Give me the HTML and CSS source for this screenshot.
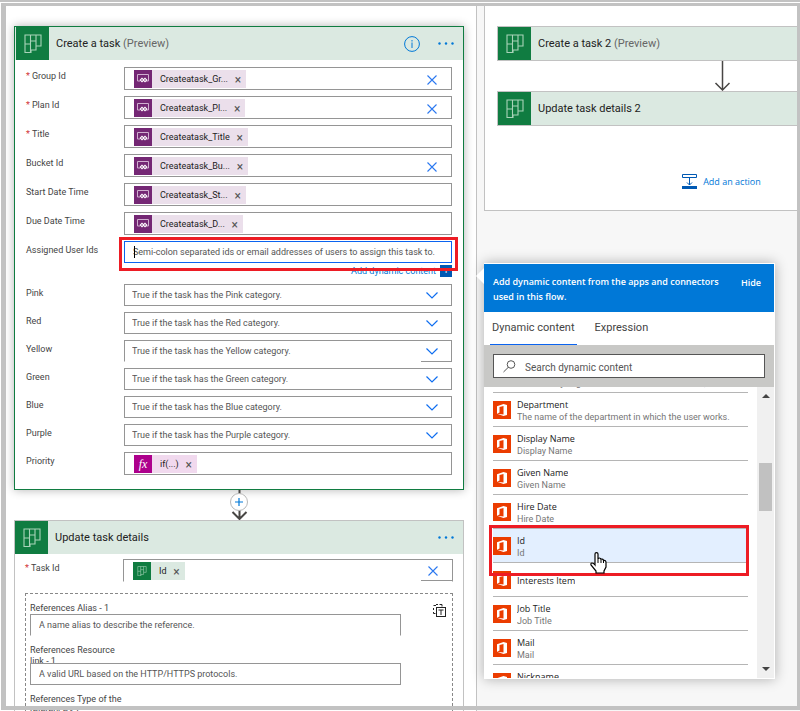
FILE: index.html
```html
<!DOCTYPE html>
<html lang="en">
<head>
<meta charset="utf-8">
<title>Flow designer</title>
<link rel="stylesheet" href="styles.css">
</head>
<body>
<svg class="defs" aria-hidden="true">
  <symbol id="planner" viewBox="0 0 18 19"><path d="M1 1H17V12H12V16H7V18.500H1ZM6.500 1V18M12 1V12M1 10H6.500M6.500 7H12" fill="none" stroke="currentColor" stroke-width="1.100"/></symbol>
  <symbol id="variable" viewBox="0 0 12 10"><path d="M3 7H.5V.5H11.500V7H9" fill="none" stroke="#cfaecf"/><path d="M2.500 6L5 3.500 6.500 5 8 3.500 10.500 6 8 8.500 6.500 7 5 8.500Z" fill="#fff"/><circle cx="5" cy="6" r=".8" fill="#742774"/><circle cx="8" cy="6" r=".8" fill="#742774"/></symbol>
  <symbol id="cross" viewBox="0 0 10 10"><path d="M.5.5L9.500 9.500M9.500.5L.5 9.500" fill="none" stroke="#2b78f0" stroke-width="1.100"/></symbol>
  <symbol id="chevron" viewBox="0 0 12 7"><path d="M.5.5L6 6 11.500.5" fill="none" stroke="currentColor" stroke-width="1.200"/></symbol>
  <symbol id="dots" viewBox="0 0 16 3"><circle cx="1.500" cy="1.500" r="1.200"/><circle cx="8" cy="1.500" r="1.200"/><circle cx="14.500" cy="1.500" r="1.200"/></symbol>
  <symbol id="office" viewBox="0 0 18 18"><path d="M4 5.200L10.500 3 14 4V14L10.500 15 4 12.800 10.500 13.500V5L6.500 6V11.500L4 12.800Z" fill="#fff"/></symbol>
</svg>
<main class="canvas">
  <section class="branch-left">
    <article class="card card-active">
      <header class="card-head">
        <span class="tile"><svg><use href="#planner"/></svg></span>
        <h2>Create a task <small>(Preview)</small></h2>
        <button class="icon-btn" aria-label="Information"><svg width="16" height="16" viewBox="0 0 16 16"><circle cx="8" cy="8" r="7.400" fill="none" stroke="currentColor"/><path d="M8 4V5.500M8 6.500V12" stroke="currentColor"/></svg></button>
        <button class="icon-btn more" aria-label="More"><svg width="16" height="3"><use href="#dots"/></svg></button>
      </header>
      <form class="form">
        <div class="row"><label for="group" class="required">Group Id</label><div class="field"><span class="token"><i><svg><use href="#variable"/></svg></i><span class="token-name">Createatask_Gr...</span><button type="button" aria-label="Remove">×</button></span><input id="group"><button type="button" class="clear" aria-label="Clear"><svg><use href="#cross"/></svg></button></div></div>
        <div class="row"><label for="plan" class="required">Plan Id</label><div class="field"><span class="token"><i><svg><use href="#variable"/></svg></i><span class="token-name">Createatask_Pl...</span><button type="button" aria-label="Remove">×</button></span><input id="plan"><button type="button" class="clear" aria-label="Clear"><svg><use href="#cross"/></svg></button></div></div>
        <div class="row"><label for="title" class="required">Title</label><div class="field"><span class="token"><i><svg><use href="#variable"/></svg></i><span class="token-name">Createatask_Title</span><button type="button" aria-label="Remove">×</button></span><input id="title"></div></div>
        <div class="row"><label for="bucket">Bucket Id</label><div class="field"><span class="token"><i><svg><use href="#variable"/></svg></i><span class="token-name">Createatask_Bu...</span><button type="button" aria-label="Remove">×</button></span><input id="bucket"><button type="button" class="clear" aria-label="Clear"><svg><use href="#cross"/></svg></button></div></div>
        <div class="row"><label for="start">Start Date Time</label><div class="field"><span class="token"><i><svg><use href="#variable"/></svg></i><span class="token-name">Createatask_St...</span><button type="button" aria-label="Remove">×</button></span><input id="start"></div></div>
        <div class="row"><label for="due">Due Date Time</label><div class="field"><span class="token"><i><svg><use href="#variable"/></svg></i><span class="token-name">Createatask_D...</span><button type="button" aria-label="Remove">×</button></span><input id="due"></div></div>
        <div class="row"><label for="assigned">Assigned User Ids</label>
          <div class="assigned">
            <input id="assigned" class="text focused" placeholder="Semi-colon separated ids or email addresses of users to assign this task to.">
            <span class="caret"></span>
            <a href="#dynamic" class="add-dynamic">Add dynamic content <span class="plus">+</span></a>
            <span class="highlight highlight-field"></span>
          </div>
        </div>
        <div class="row"><label for="pink">Pink</label><div class="select"><select id="pink"><option>True if the task has the Pink category.</option></select><svg><use href="#chevron"/></svg></div></div>
        <div class="row"><label for="red">Red</label><div class="select"><select id="red"><option>True if the task has the Red category.</option></select><svg><use href="#chevron"/></svg></div></div>
        <div class="row"><label for="yellow">Yellow</label><div class="select open"><select id="yellow"><option>True if the task has the Yellow category.</option></select><svg><use href="#chevron"/></svg></div></div>
        <div class="row"><label for="green">Green</label><div class="select"><select id="green"><option>True if the task has the Green category.</option></select><svg><use href="#chevron"/></svg></div></div>
        <div class="row"><label for="blue">Blue</label><div class="select"><select id="blue"><option>True if the task has the Blue category.</option></select><svg><use href="#chevron"/></svg></div></div>
        <div class="row"><label for="purple">Purple</label><div class="select"><select id="purple"><option>True if the task has the Purple category.</option></select><svg><use href="#chevron"/></svg></div></div>
        <div class="row"><label for="priority">Priority</label><div class="field"><span class="token token-fx"><i>fx</i><span class="token-name">if(...)</span><button type="button" aria-label="Remove">×</button></span><input id="priority"></div></div>
      </form>
    </article>
    <button class="connector" aria-label="Insert step"><svg width="20" height="30" viewBox="0 0 20 30"><path d="M10.500 0V28M3.500 22L10.500 29 17.500 22" fill="none" stroke="#484644" stroke-width="2"/><circle cx="10" cy="12" r="8.500" fill="#fff" stroke="#b8b8b8"/><path d="M6 12H14M10 8V16" stroke="#0078d7" stroke-width="1.200"/></svg></button>
    <article class="card">
      <header class="card-head">
        <span class="tile"><svg><use href="#planner"/></svg></span>
        <h2>Update task details</h2>
        <button class="icon-btn more" aria-label="More"><svg width="16" height="3"><use href="#dots"/></svg></button>
      </header>
      <form class="form form-details">
        <div class="row"><label for="taskid" class="required">Task Id</label><div class="field open"><span class="token token-planner"><i><svg><use href="#planner"/></svg></i><span class="token-name">Id</span><button type="button" aria-label="Remove">×</button></span><input id="taskid"><button type="button" class="clear" aria-label="Clear"><svg><use href="#cross"/></svg></button></div></div>
        <fieldset>
          <div class="stack">
            <label for="alias">References Alias - 1</label>
            <input id="alias" class="text open" placeholder="A name alias to describe the reference.">
            <label for="link">References Resource link - 1</label>
            <input id="link" class="text overlap" placeholder="A valid URL based on the HTTP/HTTPS protocols.">
            <label for="type">References Type of the reference - 1</label>
            <input id="type" class="text overlap">
          </div>
          <button type="button" class="switch" aria-label="Switch to input entire array"><svg width="13" height="13" viewBox="0 0 13 13"><path d="M3 1.500H.5M.5 4V6M.5 8V9.500H2.500M3 .5H5M6.500 .5H9V2.500" fill="none" stroke="#222"/><rect x="3.500" y="3.500" width="9" height="9" fill="#fff" stroke="#222"/><path d="M5.500 6H10.500M8 6V11" stroke="#222"/></svg></button>
        </fieldset>
      </form>
    </article>
  </section>
  <section class="branch-right">
    <div class="branch-box">
      <article class="card"><header class="card-head"><span class="tile"><svg><use href="#planner"/></svg></span><h2>Create a task 2 <small>(Preview)</small></h2></header></article>
      <svg class="arrow" viewBox="0 0 16 30"><path d="M8.500 0V28M1.500 22L8.500 29 15.500 22" fill="none" stroke="#484644" stroke-width="1.500"/></svg>
      <article class="card"><header class="card-head"><span class="tile"><svg><use href="#planner"/></svg></span><h2>Update task details 2</h2></header></article>
      <button class="add-action"><svg width="15" height="15" viewBox="0 0 15 15"><path d="M.5.5H14.500V3.500H.5ZM7.500 3.500V11M5 8.500L7.500 11 10 8.500" fill="none" stroke="#0059b3"/><path d="M0 12H15V15H0Z" fill="#0059b3"/></svg>Add an action</button>
    </div>
  </section>
  <aside class="popup" id="dynamic">
    <header class="popup-head"><p>Add dynamic content from the apps and connectors used in this flow.</p><button>Hide</button></header>
    <nav class="tabs"><button class="current">Dynamic content</button><button>Expression</button></nav>
    <div class="search"><div class="search-box"><svg width="13" height="13" viewBox="0 0 13 13"><circle cx="8" cy="4.500" r="3.800" fill="none" stroke="#555"/><path d="M5.300 7.300L.5 12" stroke="#555"/></svg><input aria-label="Search dynamic content" placeholder="Search dynamic content"></div></div>
    <div class="results">
      <ul>
        <li><svg><use href="#office"/></svg><div><b>Country</b><span>The country/region in which the user is located; for example, US or UK.</span></div></li>
        <li><svg><use href="#office"/></svg><div><b>Department</b><span>The name of the department in which the user works.</span></div></li>
        <li><svg><use href="#office"/></svg><div><b>Display Name</b><span>Display Name</span></div></li>
        <li><svg><use href="#office"/></svg><div><b>Given Name</b><span>Given Name</span></div></li>
        <li><svg><use href="#office"/></svg><div><b>Hire Date</b><span>Hire Date</span></div></li>
        <li class="selected"><svg><use href="#office"/></svg><div><b>Id</b><span>Id</span></div><span class="highlight highlight-item"></span>
          <svg class="cursor" viewBox="0 0 17 22"><path d="M5 12V2Q5 .7 6.500.7T8 2V7Q8 6 9.300 6T11 7.500Q11 7 12.200 7.200T13.500 8.500Q16 8 16 10.500V15L14 19V21H6V19L1 13Q.5 11 2 11 3.500 11 5 13Z" fill="#fff" stroke="#000" stroke-width="1.200"/><path d="M8 7V11M11 7.500V11M13.500 8.500V11" stroke="#000"/></svg></li>
        <li><svg><use href="#office"/></svg><div><b>Interests Item</b></div></li>
        <li><svg><use href="#office"/></svg><div><b>Job Title</b><span>Job Title</span></div></li>
        <li><svg><use href="#office"/></svg><div><b>Mail</b><span>Mail</span></div></li>
        <li><svg><use href="#office"/></svg><div><b>Nickname</b><span>Nickname</span></div></li>
      </ul>
      <div class="scrollbar"><span class="up"></span><span class="thumb"></span><span class="down"></span></div>
    </div>
  </aside>
</main>
<div class="frame-top"></div>
<div class="frame"></div>
</body>
</html>
```

FILE: styles.css
```css
* { box-sizing: border-box; }
body { margin: 0; background: #fff; color: #444; font: 9px/12px Roboto, "Open Sans", sans-serif; }
button, input, select { font: inherit; color: inherit; border: 0; padding: 0; margin: 0; background: none; border-radius: 0; outline: 0; min-width: 0; }
button { cursor: pointer; }
input::placeholder { color: #555; opacity: 1; }
svg { display: block; flex: none; }
.defs { position: absolute; width: 0; height: 0; }

.canvas { position: relative; display: grid; grid-template-columns: minmax(0, 477fr) minmax(0, 323fr); height: 100vh; overflow: hidden; }
.branch-left { padding: 26px 12px 0 14px; border-right: 1px solid #c2c2c2; }
.branch-right { background: #f7f7f7; padding-left: 7px; overflow: hidden; }
.branch-box { display: flex; flex-direction: column; align-items: center; width: 476px; padding: 26px 13px 21px 12px; background: #fff; border: 1px solid #c2c2c2; border-top: 0; }
.branch-box .card { width: 100%; }

.card { border: 1px solid #c2c2c2; background: #fff; }
.card-active { border-color: #107c41; box-shadow: 0 0 9px rgba(0, 0, 0, .3); }
.card-head { display: flex; align-items: center; background: #dbe9e1; padding-right: 9px; }
.card-active .card-head { padding-left: 1px; }
.tile { display: grid; place-items: center; width: 33px; height: 33px; background: #107c41; color: #a9d3b9; }
.tile svg { width: 18px; height: 19px; }
.card-head h2 { flex: 1; margin: 0 0 0 7px; font-size: 11px; line-height: 16px; font-weight: 400; color: #222; }
.card-head small { font-size: 11px; color: #666; }
.icon-btn { color: #0078d7; fill: #0078d7; }
.more { margin-left: 18px; }

.form { display: grid; gap: 6px; padding: 7px 11px 14px 11px; }
.row { display: grid; grid-template-columns: 98px minmax(0, 1fr); align-items: start; }
.row > label { line-height: 19px; }
.required::before { content: "*"; color: #d13438; margin-right: 2px; }
.field { display: flex; align-items: center; height: 23px; padding-left: 9px; border: 1px solid #959595; }
.field input { flex: 1; height: 19px; }
.token { display: flex; align-items: center; height: 18px; background: #ebdfeb; color: #222; }
.token i { display: grid; place-items: center; width: 18px; height: 18px; margin-right: 8px; background: #742774; color: #fff; font: italic 12px/16px "Liberation Serif", serif; }
.token i svg { width: 12px; height: 10px; }
.token button { width: 16px; height: 18px; margin-left: 2px; font-size: 12px; line-height: 20px; color: #555; }
.token-fx { background: #f1d9ee; }
.token-fx i { background: #ad008c; }
.token-planner { background: #dbe9e1; }
.token-planner i { background: #107c41; color: #a9d3b9; }
.clear { display: grid; place-items: center; align-self: stretch; width: 31px; padding: 2px 8px 0 0; }
.clear svg { width: 10px; height: 10px; }
.text { display: block; width: 100%; height: 22px; padding-left: 8px; border: 1px solid #959595; }
.focused { border-color: #0b64f0; }
.select { display: flex; align-items: center; height: 22px; border: 1px solid #959595; }
.select select { appearance: none; flex: 1; height: 20px; padding-left: 7px; color: #555; }
.select svg { width: 12px; height: 7px; margin: 0 13px 0 6px; color: #0f6ef0; }
.open { border-bottom-color: transparent; }
.field.open .clear { border-bottom: 1px solid #959595; }
.select.open { background: linear-gradient(#959595, #959595) right bottom / 31px 1px no-repeat border-box; }

.assigned { position: relative; }
.caret { position: absolute; left: 10px; top: 5px; width: 1px; height: 12px; background: #000; }
.add-dynamic { display: flex; justify-content: flex-end; align-items: center; height: 15px; color: #0078d7; text-decoration: none; }
.plus { width: 12px; margin-left: 4px; background: #0059b3; color: #fff; line-height: 12px; text-align: center; }
.highlight { position: absolute; border: 3px solid #ed1c24; pointer-events: none; }
.highlight-field { inset: -4px -6px 7px -5px; }

.connector { display: block; margin: 0 auto; }
.form-details { padding: 5px 10px 0 10px; gap: 11px; }
fieldset { display: flex; justify-content: space-between; align-items: flex-start; margin: 0; padding: 8px 6px 8px 4px; border: 1px dashed #888; min-width: 0; }
.stack { display: grid; flex: 0 1 371px; }
.stack label { width: 98px; line-height: 11px; padding-top: 1px; }
.stack .text { margin-bottom: 8px; }
.stack .overlap { margin-top: -4px; }
.switch { margin-top: 2px; }

.arrow { width: 16px; height: 30px; }
.add-action { display: flex; align-items: center; gap: 6px; margin-top: 48px; color: #0078d7; font-family: "Open Sans", sans-serif; }

.popup { position: absolute; left: calc(100% - 316px); top: 263px; width: 291px; border: 1px solid #fff; border-left: 0; background: #fff; box-shadow: 0 0 12px rgba(0, 0, 0, .3); }
.popup::before { content: ""; position: absolute; left: -8px; top: 4px; border: 8px solid transparent; border-right-color: #fff; border-left: 0; }
.popup-head { display: flex; justify-content: space-between; align-items: flex-start; padding: 10px 13px 8px 9px; background: #0078d7; color: #fff; font-family: "Open Sans", sans-serif; font-weight: 600; }
.popup-head p { margin: 0; width: 240px; line-height: 15px; }
.popup-head button { line-height: 17px; }
.tabs { display: flex; gap: 16px; padding-left: 6px; }
.tabs button { height: 33px; padding: 0 2px; font-size: 11px; border-bottom: 1px solid transparent; }
.tabs .current { border-bottom-color: #0b64f0; }
.search { padding: 9px; background: #c8c8c6; }
.search-box { display: flex; align-items: center; gap: 9px; height: 24px; padding-left: 9px; background: #fff; border: 1px solid #555; }
.search-box input { flex: 1; height: 22px; padding-top: 2px; font-size: 10px; }
.results { display: flex; height: 291px; overflow: hidden; }
.results ul { flex: 1; min-width: 0; margin: -28px 9px 0; padding: 0; list-style: none; }
.results li { position: relative; display: flex; align-items: center; gap: 6px; height: 34px; border-bottom: 1px solid #b5b5b5; }
.results li > svg:first-child { width: 18px; height: 18px; background: #eb3c00; }
.results li div { min-width: 0; padding-top: 2px; }
.results b, .results li div span { display: block; font-weight: 400; overflow: hidden; white-space: nowrap; text-overflow: ellipsis; }
.results b { font-family: "Open Sans", sans-serif; color: #222; }
.results li div span { color: #767676; }
.results .selected { background: #e3efff; }
.highlight-item { inset: -4px -1px -14px -4px; z-index: 1; }
.cursor { position: absolute; left: 97px; top: 23px; width: 17px; height: 22px; z-index: 2; }
.scrollbar { display: flex; flex-direction: column; align-items: center; width: 17px; padding: 7px 0; background: #f0f0f0; }
.up, .down { border: 4px solid transparent; }
.up { border-top: 0; border-bottom-color: #444; }
.down { border-bottom: 0; border-top-color: #444; margin-top: auto; }
.thumb { width: 13px; height: 48px; margin-top: 65px; background: #c1c1c1; }

.frame-top { position: fixed; inset: 0 0 auto 0; height: 3px; background: #c2c2c2; border-bottom: 1px solid #fff; }
.frame { position: fixed; inset: 3px 0 1px 1px; border: solid #c2c2c2; border-width: 3px 3px 4px 5px; pointer-events: none; }
```
